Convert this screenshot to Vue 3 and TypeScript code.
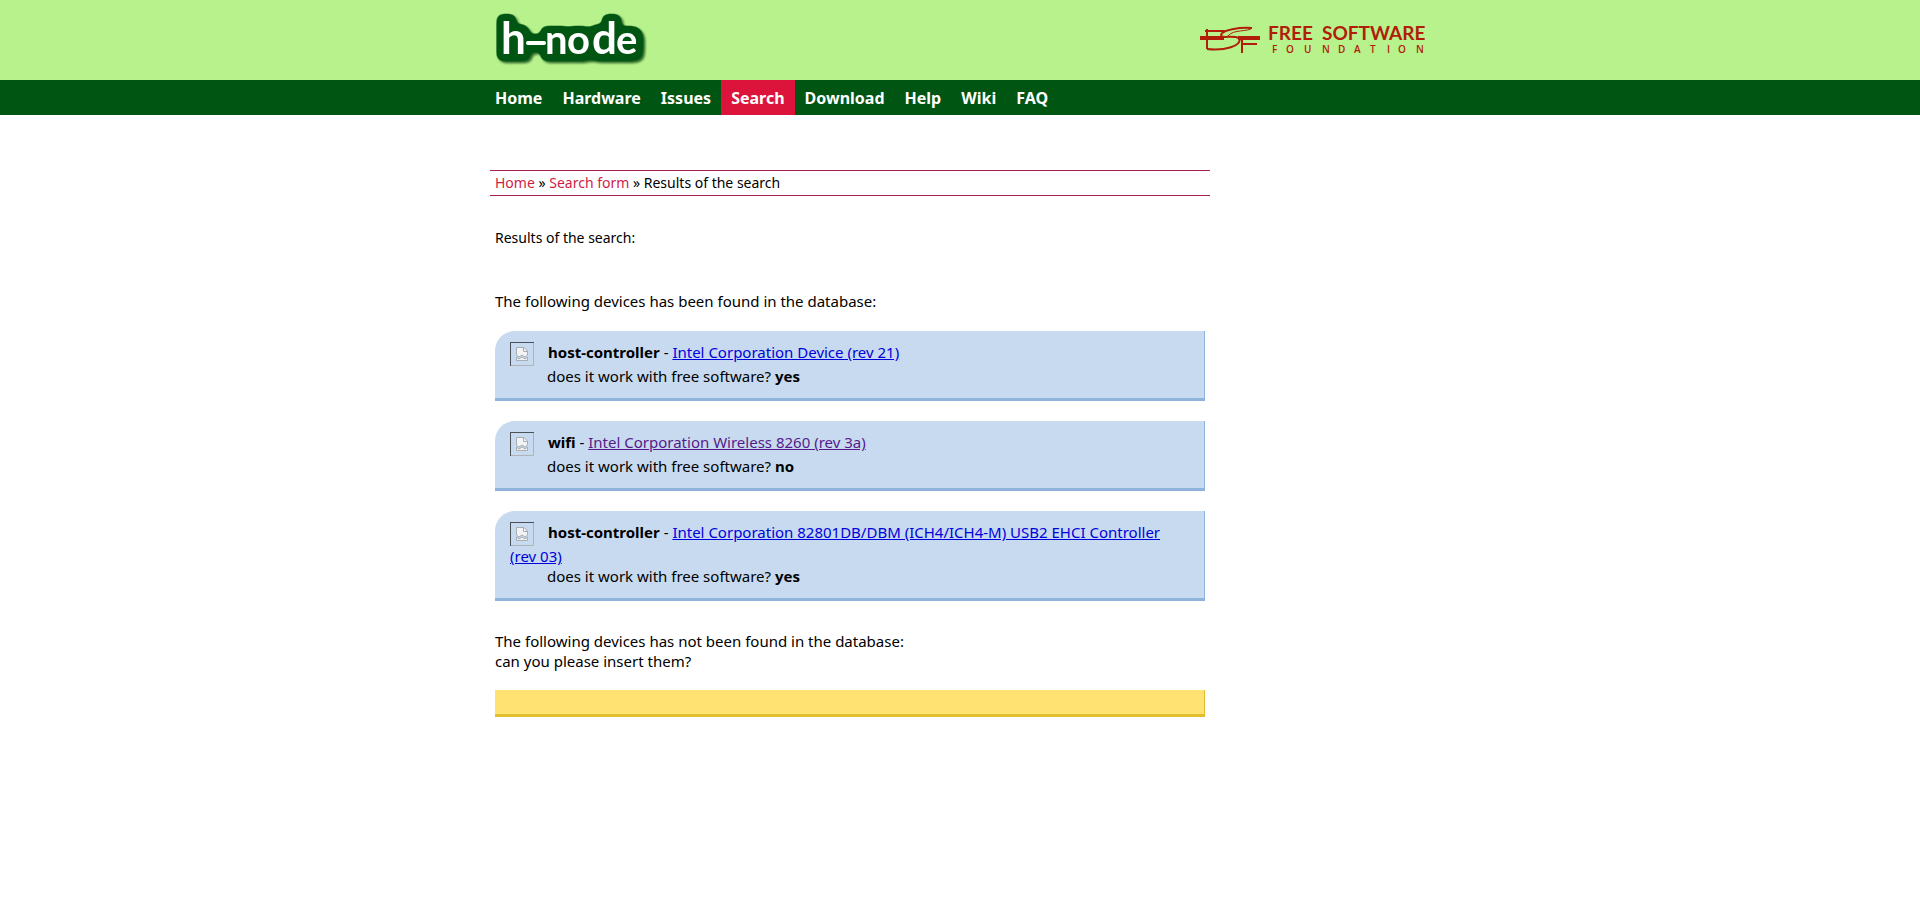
<script setup lang="ts">
interface NavItem {
  label: string
  active?: boolean
}

interface Device {
  type: string
  name: string
  works: string
  visited?: boolean
}

const nav: NavItem[] = [
  { label: 'Home' },
  { label: 'Hardware' },
  { label: 'Issues' },
  { label: 'Search', active: true },
  { label: 'Download' },
  { label: 'Help' },
  { label: 'Wiki' },
  { label: 'FAQ' },
]

const devices: Device[] = [
  { type: 'host-controller', name: 'Intel Corporation Device (rev 21)', works: 'yes' },
  { type: 'wifi', name: 'Intel Corporation Wireless 8260 (rev 3a)', works: 'no', visited: true },
  {
    type: 'host-controller',
    name: 'Intel Corporation 82801DB/DBM (ICH4/ICH4-M) USB2 EHCI Controller (rev\u00a003)',
    works: 'yes',
  },
]
</script>

<template>
  <div class="page">
    <header class="header">
      <div class="container header-inner">
        <a href="#" class="logo" aria-label="h-node home">
          <svg width="160" height="80" viewBox="0 0 160 80">
            <defs>
              <filter id="logo-outline" filterUnits="userSpaceOnUse" x="0" y="0" width="160" height="80" color-interpolation-filters="sRGB">
                <feMorphology in="SourceAlpha" operator="dilate" radius="5" />
                <feGaussianBlur stdDeviation="3" />
                <feComponentTransfer result="shape">
                  <feFuncA type="linear" slope="8" intercept="-1.500" />
                </feComponentTransfer>
                <feFlood flood-color="#005512" />
                <feComposite in2="shape" operator="in" result="outline" />
                <feDropShadow in="outline" dx="2" dy="2" stdDeviation="1" flood-color="#003a08" flood-opacity="0.75" result="shaded" />
                <feMerge>
                  <feMergeNode in="shaded" />
                  <feMergeNode in="SourceGraphic" />
                </feMerge>
              </filter>
            </defs>
            <g class="logo-letters" filter="url(#logo-outline)">
              <text y="54"><tspan x="6" class="tall">h</tspan><tspan x="50 72">no</tspan><tspan x="97" class="tall">d</tspan><tspan x="121">e</tspan></text>
              <path d="M33 43h16" stroke="#fff" stroke-width="4" stroke-linecap="round" />
            </g>
          </svg>
        </a>
        <a href="#" class="fsf" aria-label="Free Software Foundation">
          <svg width="230" height="50" viewBox="0 0 230 50">
            <g fill="none" stroke="#b01d08">
              <path d="M0 23H24M38 23H60" stroke-width="4" />
              <path d="M7 14v20" stroke-width="2" />
              <path d="M5 16H25" stroke-width="2" />
              <path d="M52 13C40 12 22 15 21 20C21 24 32 20 39 23C43 31 24 36 7 34" stroke-width="2" />
              <path d="M52 13C49 17 33 14 28 21" stroke-width="1" />
              <path d="M42 21v17M42 29H57" stroke-width="2" />
            </g>
            <text class="fsf-title" x="68" y="25">FREE</text>
            <text class="fsf-title" x="122" y="25">SOFTWARE</text>
            <text class="fsf-sub" x="72 86 104 122 138 154 170 187 198 216" y="38">FOUNDATION</text>
          </svg>
        </a>
      </div>
    </header>

    <nav class="nav">
      <ul class="container nav-list">
        <li v-for="item in nav" :key="item.label">
          <a href="#" :class="{ active: item.active }">{{ item.label }}</a>
        </li>
      </ul>
    </nav>

    <div class="container body">
      <main class="main">
        <div class="breadcrumb">
          <a href="#">Home</a> » <a href="#">Search form</a> » Results of the search
        </div>

        <div class="content">
          <p class="title">Results of the search:</p>

          <p class="intro">The following devices has been found in the database:</p>

          <div v-for="(device, i) in devices" :key="i" class="device">
            <div class="device-name">
              <svg class="thumb" width="24" height="24" viewBox="0 0 24 24">
                <path d="M0 24V0H24" fill="none" stroke="#4c5157" stroke-width="2" />
                <path d="M23.500 1v22.500H1" fill="none" stroke="#aeb3b8" />
                <path d="M6.500 13V5.500H14L17.500 9v4l-2.500 2-3-2-3 2z" fill="#f2f4f6" stroke="#a9adb1" />
                <path d="M13.500 5.500V9.500H17.500" fill="none" stroke="#a9adb1" />
                <path d="M6.500 18.500V15l2.500 2 3-2 3 2 2.500-2v3.500z" fill="#f2f4f6" stroke="#a9adb1" />
              </svg><b>{{ device.type }}</b> - <a href="#" :class="{ visited: device.visited }">{{ device.name }}</a>
            </div>
            <div class="device-works">
              does it work with free software? <b>{{ device.works }}</b>
            </div>
          </div>

          <p class="missing">
            The following devices has not been found in the database:<br />
            can you please insert them?
          </p>

          <div class="not-found"></div>
        </div>
      </main>
    </div>
  </div>
</template>

<style>
body {
  margin: 0;
  background: #fff;
}
</style>

<style scoped>
.page {
  font-family: "Noto Sans", "Open Sans", sans-serif;
  font-size: 15px;
  line-height: 20px;
  color: #000;
}

.container {
  box-sizing: border-box;
  max-width: 950px;
  margin: 0 auto;
}

.header {
  background: #b7f28c;
}

.header-inner {
  display: flex;
  justify-content: space-between;
  align-items: center;
  height: 80px;
  padding: 0 5px 0 10px;
}

.logo,
.fsf {
  display: block;
}

.logo svg,
.fsf svg {
  display: block;
}

.logo-letters {
  font-family: Lato, sans-serif;
  font-size: 40px;
  font-weight: 700;
  fill: #fff;
}

.logo-letters .tall {
  font-size: 44px;
}

.fsf-title {
  font-family: Lato, sans-serif;
  font-size: 19px;
  font-weight: 700;
  fill: #b01d08;
}

.fsf-sub {
  font-family: "Open Sans", sans-serif;
  font-size: 10px;
  font-weight: 600;
  fill: #b01d08;
}

.nav {
  background: #005512;
}

.nav-list {
  display: flex;
  flex-wrap: wrap;
  padding: 0;
  list-style: none;
}

.nav-list a {
  display: block;
  padding: 1px 10px 0;
  font-size: 16px;
  font-weight: 700;
  line-height: 34px;
  color: #fff;
  text-decoration: none;
}

.nav-list a.active {
  background: #dc143c;
}

.body {
  padding: 55px 5px 40px;
}

.main {
  max-width: 720px;
}

.breadcrumb {
  padding: 2px 5px;
  border-top: 1px solid #a3224e;
  border-bottom: 1px solid #a3224e;
  font-size: 14px;
}

.breadcrumb a {
  color: #d01c45;
  text-decoration: none;
}

.content {
  padding: 0 5px;
}

p {
  margin: 0;
}

.title {
  padding-top: 32px;
  font-size: 14px;
}

.intro {
  padding: 43px 0 20px;
}

.device {
  margin-bottom: 20px;
  padding: 11px 15px 12px;
  background: #c7daef;
  border-right: 1px solid #8fb4dc;
  border-bottom: 3px solid #8fb4dc;
  border-top-left-radius: 20px;
}

.device a {
  color: #0000dd;
}

.device a.visited {
  color: #551a8b;
}

.thumb {
  margin-right: 14px;
  vertical-align: top;
}

.device-works {
  padding-left: 37px;
}

.missing {
  padding: 10px 0 19px;
}

.not-found {
  height: 24px;
  background: #ffe271;
  border-right: 1px solid #e3bf2e;
  border-bottom: 3px solid #e3bf2e;
}
</style>
